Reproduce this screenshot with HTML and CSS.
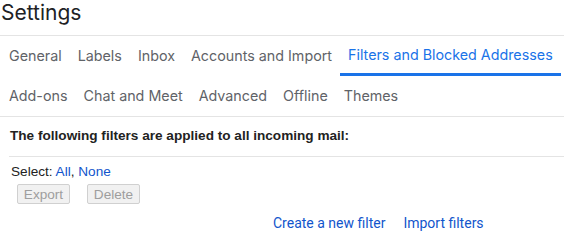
FILE: index.html
```html
<!DOCTYPE html>
<html lang="en">
<head>
    <meta charset="UTF-8">
    <meta name="viewport" content="width=device-width, initial-scale=1.0">
    <title>Settings</title>
    <link rel="stylesheet" href="styles.css">
</head>
<body>
    <h1 class="page-title">Settings</h1>
    <nav class="tabs">
        <div class="tab-row">
            <a class="tab">General</a>
            <a class="tab">Labels</a>
            <a class="tab">Inbox</a>
            <a class="tab">Accounts and Import</a>
            <a class="tab active">Filters and Blocked Addresses</a>
        </div>
        <div class="tab-row last">
            <a class="tab">Add-ons</a>
            <a class="tab">Chat and Meet</a>
            <a class="tab">Advanced</a>
            <a class="tab">Offline</a>
            <a class="tab">Themes</a>
        </div>
    </nav>
    <div class="filters">
        <div class="filters-heading">The following filters are applied to all incoming mail:</div>
        <div class="filters-body">
            <div class="select-line">Select: <a class="link">All</a>, <a class="link">None</a></div>
            <div class="actions">
                <button class="btn" disabled>Export</button>
                <button class="btn" disabled>Delete</button>
            </div>
            <div class="footer-links">
                <a class="link">Create a new filter</a>
                <a class="link">Import filters</a>
            </div>
        </div>
    </div>
</body>
</html>
```

FILE: styles.css
```css
body {
    margin: 0;
    font-family: 'Liberation Sans', Arial, sans-serif;
    background-color: #fff;
    color: #202124;
}
.page-title {
    margin: 0;
    height: 36px;
    padding-left: 1px;
    font-family: 'Inter', 'Open Sans', sans-serif;
    font-size: 21px;
    font-weight: 400;
    line-height: 25px;
    color: #202124;
    border-bottom: 1px solid #e4e4e4;
    box-sizing: border-box;
}
.tab-row {
    display: flex;
    height: 40px;
    padding-left: 1px;
}
.tab-row.last {
    border-bottom: 1px solid #e4e4e4;
}
.tab {
    padding: 0 8px;
    font-family: 'Inter', 'Open Sans', sans-serif;
    font-size: 14.3px;
    line-height: 40px;
    color: #5f6368;
    white-space: nowrap;
    box-sizing: border-box;
}
.tab.active {
    color: #1a73e8;
    border-bottom: 3px solid #1a73e8;
    line-height: 37px;
}
.filters {
    padding-left: 9px;
    font-size: 13.6px;
}
.filters-heading {
    height: 39px;
    padding-left: 1px;
    line-height: 38px;
    font-weight: 700;
    color: #222;
    border-bottom: 1px solid #e4e4e4;
}
.filters-body {
    padding-top: 6px;
}
.select-line {
    padding-left: 2px;
    line-height: 18px;
    color: #222;
}
.link {
    color: #15c;
    cursor: pointer;
}
.actions {
    display: flex;
    gap: 17px;
    padding: 3px 0 0 8px;
}
.btn {
    width: 53px;
    height: 20px;
    padding: 0;
    font-family: 'Liberation Sans', Arial, sans-serif;
    font-size: 13.6px;
    color: #9e9e9e;
    background-color: #f1f1f1;
    border: 1px solid #d0d0d0;
    border-radius: 2px;
}
.footer-links {
    display: flex;
    gap: 18px;
    padding: 10px 0 0 264px;
    font-family: 'Roboto', 'Liberation Sans', sans-serif;
    font-size: 14px;
    line-height: 18px;
}
```
